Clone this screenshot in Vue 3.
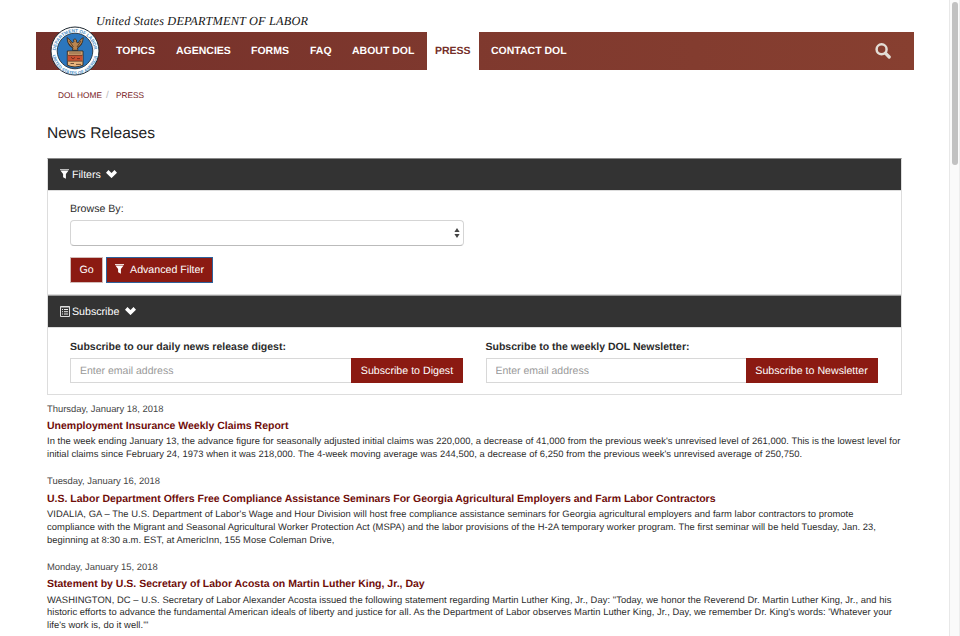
<script setup>
const nav = [
  { label: 'TOPICS', cls: 'topics' },
  { label: 'AGENCIES', cls: 'agencies' },
  { label: 'FORMS', cls: 'forms' },
  { label: 'FAQ', cls: 'faq' },
  { label: 'ABOUT DOL', cls: 'about' },
  { label: 'PRESS', cls: 'press' },
  { label: 'CONTACT DOL', cls: 'contact' },
]

const releases = [
  {
    date: 'Thursday, January 18, 2018',
    title: 'Unemployment Insurance Weekly Claims Report',
    lines: [
      "In the week ending January 13, the advance figure for seasonally adjusted initial claims was 220,000, a decrease of 41,000 from the previous week's unrevised level of 261,000. This is the lowest level for",
      "initial claims since February 24, 1973 when it was 218,000. The 4-week moving average was 244,500, a decrease of 6,250 from the previous week's unrevised average of 250,750.",
    ],
  },
  {
    date: 'Tuesday, January 16, 2018',
    title: 'U.S. Labor Department Offers Free Compliance Assistance Seminars For Georgia Agricultural Employers and Farm Labor Contractors',
    lines: [
      "VIDALIA, GA – The U.S. Department of Labor's Wage and Hour Division will host free compliance assistance seminars for Georgia agricultural employers and farm labor contractors to promote",
      'compliance with the Migrant and Seasonal Agricultural Worker Protection Act (MSPA) and the labor provisions of the H-2A temporary worker program. The first seminar will be held Tuesday, Jan. 23,',
      'beginning at 8:30 a.m. EST, at AmericInn, 155 Mose Coleman Drive,',
    ],
  },
  {
    date: 'Monday, January 15, 2018',
    title: 'Statement by U.S. Secretary of Labor Acosta on Martin Luther King, Jr., Day',
    lines: [
      'WASHINGTON, DC – U.S. Secretary of Labor Alexander Acosta issued the following statement regarding Martin Luther King, Jr., Day: "Today, we honor the Reverend Dr. Martin Luther King, Jr., and his',
      "historic efforts to advance the fundamental American ideals of liberty and justice for all. As the Department of Labor observes Martin Luther King, Jr., Day, we remember Dr. King's words: 'Whatever your",
      "life's work is, do it well.'\"",
    ],
  },
]
</script>

<template>
  <div class="page">
    <main class="content">
      <header>
        <div class="agency">United States DEPARTMENT OF LABOR</div>
        <nav class="bar">
          <a v-for="n in nav" :key="n.label" :class="['item', n.cls]">{{ n.label }}</a>
          <svg class="search" viewBox="0 0 16 16">
            <circle cx="6.6" cy="6.3" r="5" fill="none" stroke="#e3ddd5" stroke-width="2.5" />
            <path d="M10.4 10.2L14.2 14" stroke="#e3ddd5" stroke-width="3.2" stroke-linecap="round" />
          </svg>
          <svg class="seal" viewBox="0 0 50 50">
            <circle cx="25" cy="25" r="24" fill="#fff" stroke="#1c2730" stroke-width="1" />
            <circle cx="25" cy="25" r="17.8" fill="#2b76bd" stroke="#26313a" stroke-width=".9" />
            <defs>
              <path id="sealTop" d="M5.9 27.5A19.2 19.2 0 1 1 44.1 27.5" />
              <path id="sealBottom" d="M2.4 26A22.6 22.6 0 0 0 47.6 26" />
            </defs>
            <text class="ring"><textPath href="#sealTop" startOffset="3">DEPARTMENT OF LABOR</textPath></text>
            <text class="ring bottom"><textPath href="#sealBottom" startOffset="3">UNITED STATES OF AMERICA</textPath></text>
            <path d="M17 11.5L20 14L22.5 17L24 15.3L23.4 13.8L25 12.8L26.5 14L26.3 16L28 17L30.5 13.5L33.3 11.5L32.5 16L30.6 19.5L27.5 22L28 24.3H22.3L23 22L19.7 19.8L17.7 16Z" fill="#b98550" stroke="#302821" stroke-width=".8" />
            <path d="M19.5 15L23.4 21M31 15L27 21M18.5 17.5L22.8 22M32 17.5L27.4 22" stroke="#3d3027" stroke-width=".8" />
            <path d="M17.3 25H33V39.2Q29.5 40.8 25 41Q20.7 40.8 17.3 39.2Z" fill="#e8b47c" stroke="#302821" stroke-width=".9" />
            <rect x="17.8" y="29" width="14.7" height="6" fill="#c75132" />
            <path d="M19 27H31.5M18.2 29.2H32.4M18.2 35.2H32.4M20.5 37.5H24M26 38.4H31" stroke="#513525" stroke-width=".8" />
            <path d="M21 31.2L23 33L25 31.4M27 32.6H30" fill="none" stroke="#722f22" />
          </svg>
        </nav>
      </header>

      <div class="crumbs"><a>DOL HOME</a><i>/</i><a>PRESS</a></div>
      <h1>News Releases</h1>

      <section class="panel">
        <div class="head">
          <svg class="funnel" viewBox="0 0 9 10"><path d="M0 0H9V1H0Z" fill="#bbb" /><path d="M.4 1.5H8.6L5.9 5V9.8L3.1 8.3V5Z" fill="#fff" /></svg>
          <span class="filters">Filters</span>
          <svg class="chev" viewBox="0 0 11 8"><path d="M1.2 1.4L5.5 5.6L9.8 1.4" fill="none" stroke="#fff" stroke-width="3.6" /></svg>
        </div>
        <div class="browse">
          <label>Browse By:</label>
          <div class="select">
            <svg viewBox="0 0 6 10"><path d="M3 0L5.6 4H.4ZM3 10L.4 6H5.6Z" fill="#444" /></svg>
          </div>
          <div class="buttons">
            <button class="go">Go</button>
            <button class="advanced">
              <svg class="funnel" viewBox="0 0 9 10"><path d="M0 0H9V1H0Z" fill="#f0d9d6" /><path d="M.4 1.5H8.6L5.9 5V9.8L3.1 8.3V5Z" fill="#fff" /></svg>
              <span>Advanced Filter</span>
            </button>
          </div>
        </div>
        <div class="head second">
          <svg class="list" viewBox="0 0 10 11">
            <path d="M.5 .5H9.5V10.5H.5Z" fill="none" stroke="#ddd" />
            <path d="M.5 1H9.5" stroke="#ddd" />
            <path d="M2 3.5H3M4 3.5H8M2 5.7H3M4 5.7H8M2 8H3M4 8H8" stroke="#fff" stroke-width=".9" />
          </svg>
          <span class="subscribe">Subscribe</span>
          <svg class="chev" viewBox="0 0 11 8"><path d="M1.2 1.4L5.5 5.6L9.8 1.4" fill="none" stroke="#fff" stroke-width="3.6" /></svg>
        </div>
        <div class="forms-row">
          <div class="form digest">
            <label>Subscribe to our daily news release digest:</label>
            <div class="group"><input placeholder="Enter email address"><button>Subscribe to Digest</button></div>
          </div>
          <div class="form newsletter">
            <label>Subscribe to the weekly DOL Newsletter:</label>
            <div class="group"><input placeholder="Enter email address"><button>Subscribe to Newsletter</button></div>
          </div>
        </div>
      </section>

      <article v-for="r in releases" :key="r.date">
        <div class="date">{{ r.date }}</div>
        <h2><span>{{ r.title }}</span></h2>
        <p><span v-for="l in r.lines" :key="l">{{ l }}</span></p>
      </article>
    </main>
    <aside class="track"><div class="thumb"></div></aside>
  </div>
</template>

<style>
html, body { overflow: hidden; background: #fff; }
</style>

<style scoped>
* { box-sizing: border-box; }
.page {
  display: flex;
  width: 960px;
  height: 636px;
  overflow: hidden;
  font-family: "Liberation Sans", Arial, sans-serif;
  font-size: 10.5px;
  color: #2b2b2b;
  text-rendering: geometricPrecision;
  white-space: nowrap;
}
.content { width: 949px; height: 636px; overflow: hidden; }
.track { width: 11px; background: #fafafa; border-left: 1px solid #e8e8e8; border-right: 1px solid #ededed; padding: 2px 1px 0 2px; }
.thumb { width: 6px; height: 163px; border-radius: 3px; background: #c1c1c1; }
.agency { height: 32px; padding: 14px 0 0 96px; font: italic 12.3px/15px "Liberation Serif", serif; letter-spacing: .17px; color: #151515; }
.bar {
  position: relative;
  display: flex;
  width: 877.6px;
  height: 38px;
  margin-left: 36px;
  padding-left: 80px;
  background: linear-gradient(90deg, #75302a, #7f392e 50%, #873f30);
  color: #fff;
  font-weight: bold;
  font-size: 10.5px;
  line-height: 39px;
}
.topics { width: 60px; }
.agencies { width: 75px; }
.forms { width: 59px; }
.faq { width: 42px; }
.about { width: 75px; }
.press { width: 52px; padding-left: 8px; background: #fff; color: #75302a; }
.contact { padding-left: 12px; }
.search { width: 16px; height: 16px; margin: 11px 22.6px 0 auto; }
.seal { position: absolute; left: 14px; top: -6px; width: 50px; height: 50px; }
.ring { font: bold 4.6px/1 "Liberation Sans", sans-serif; fill: #4c8fc6; }
.ring.bottom { font-size: 4.4px; }
.crumbs { display: flex; height: 50px; padding: 19px 0 0 58px; font-size: 8.3px; line-height: 13px; color: #76201a; }
.crumbs i { width: 14px; padding-left: 4px; color: #bbb; font-style: normal; font-size: 10px; }
h1 { height: 38px; margin: 0 0 0 47px; padding-top: 4px; font-size: 15.55px; line-height: 20px; font-weight: normal; color: #222; }
.panel { width: 855px; height: 237px; margin-left: 47px; border: 1px solid #ddd; border-top-color: #888; }
.head { display: flex; height: 31px; padding: 0 0 0 12px; background: #333; color: #fff; line-height: 32px; }
.funnel { width: 9px; height: 10px; margin-top: 10px; }
.filters { width: 34px; margin-left: 3px; font-size: 10.6px; }
.chev { width: 11px; height: 8px; margin-top: 11px; }
.second { height: 32px; border-top: 1px solid #999; }
.list { width: 10px; height: 11px; margin-top: 10px; }
.subscribe { width: 53px; margin-left: 2px; font-size: 10.65px; }
.browse { height: 105px; padding: 12px 0 0 22px; border-top: 1px solid #ddd; border-bottom: 1px solid #ddd; }
.browse label { display: block; height: 17px; font-size: 10.6px; line-height: 13px; }
.select { display: flex; justify-content: flex-end; width: 394px; height: 26px; padding: 7px 3px 0 0; border: 1px solid #d5d5d5; border-bottom-color: #bbb; border-radius: 4px; }
.select svg { width: 6px; height: 10px; }
button { display: flex; margin: 0; padding: 0; border: 1px solid #8b1a12; background: #8b1a12; color: #fff; font: inherit; font-size: 10.65px; line-height: 12px; text-rendering: geometricPrecision; align-items: center; justify-content: center; }
.buttons { display: flex; gap: 3px; margin-top: 11px; }
.buttons button { height: 26px; }
.go { width: 33px; border-color: #d2bcb9; }
.advanced { width: 107px; border-color: #2d629c; }
.advanced .funnel { margin: -3px 6px 0 0; }
.forms-row { display: flex; padding: 13px 0 0 22px; border-top: 1px solid #ddd; }
.form label { display: block; height: 17px; font-weight: bold; line-height: 13px; }
.group { display: flex; height: 25px; }
.digest { width: 415.5px; }
input { width: 281px; height: 25px; margin: 0; padding: 1px 9px 0; border: 1px solid #d8d8d8; border-right: 0; border-radius: 0; background: #fff; font: inherit; text-rendering: geometricPrecision; outline: 0; }
input::placeholder { color: #999; opacity: 1; }
.digest button { width: 112px; }
.newsletter input { width: 260px; }
.newsletter button { width: 132px; }
article { margin: 0 0 0 47px; padding-bottom: 14.5px; }
article:first-of-type { padding-top: 7.6px; }
.date { height: 14.4px; font-size: 9.42px; line-height: 12px; color: #444; }
h2 { height: 18.5px; margin: 0; font-size: 10.5px; line-height: 18px; color: #6f0d09; }
p { margin: 0; font-size: 9.4px; line-height: 12.7px; letter-spacing: .06px; }
p span { display: block; width: max-content; }
</style>
